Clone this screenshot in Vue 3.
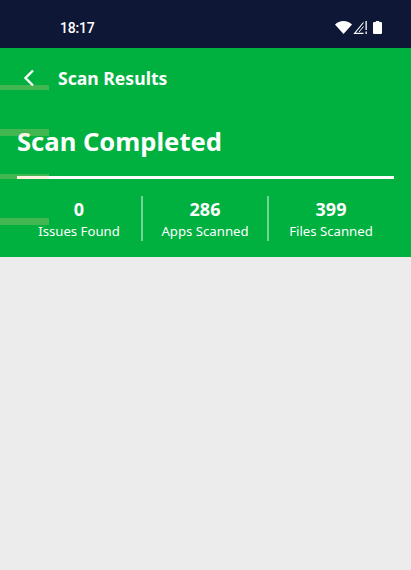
<script setup>
const stats = [
  { value: '0', label: 'Issues Found' },
  { value: '286', label: 'Apps Scanned' },
  { value: '399', label: 'Files Scanned' }
]
const streaks = [
  { top: 37, height: 5 },
  { top: 81, height: 7 },
  { top: 126, height: 5 },
  { top: 170, height: 7 }
]
</script>

<template>
  <div class="page">
    <div class="status">
      <span class="time">18:17</span>
      <div class="status-icons">
        <svg class="wifi" width="17" height="13" viewBox="0 0 17 13"><path d="M0 3.6C2.2 1.3 5.2 0 8.5 0s6.300 1.300 8.500 3.600L8.500 13z" fill="#fff"/></svg>
        <svg class="signal" width="14" height="13" viewBox="0 0 14 13"><path d="M10.500 1.500 1.500 12.400H10.500" fill="none" stroke="#fff" stroke-width="1.100"/><path d="M10.500 5.500 6 11" fill="none" stroke="#fff" stroke-width="1"/><path d="M12.500 0h1.300v9h-1.300zM12.500 10.500h1.300V13h-1.300z" fill="#fff"/></svg>
        <svg width="9" height="13" viewBox="0 0 9 13"><path d="M2.800 0h3.400v1H8a1 1 0 0 1 1 1v10a1 1 0 0 1-1 1H1a1 1 0 0 1-1-1V2a1 1 0 0 1 1-1h1.800z" fill="#fff"/></svg>
      </div>
    </div>
    <header class="hero">
      <i v-for="s in streaks" :key="s.top" class="streak" :style="{ top: s.top + 'px', height: s.height + 'px' }"></i>
      <div class="nav">
        <svg class="back" width="12" height="18" viewBox="0 0 12 18"><path d="M10 1.500 2.500 9l7.500 7.500" fill="none" stroke="#fff" stroke-width="2.400"/></svg>
        <span class="nav-title">Scan Results</span>
      </div>
      <h1 class="headline">Scan Completed</h1>
      <div class="progress"></div>
      <div class="stats">
        <div v-for="s in stats" :key="s.label" class="stat">
          <span class="value">{{ s.value }}</span>
          <span class="label">{{ s.label }}</span>
        </div>
      </div>
    </header>
  </div>
</template>

<style scoped>
.page {
  width: 411px;
  height: 570px;
  background: #ececec;
  font-family: "Noto Sans", "Open Sans", sans-serif;
  color: #fff;
  overflow: hidden;
}
.status {
  height: 48px;
  background: #0f1736;
  display: flex;
  align-items: center;
  justify-content: space-between;
  padding: 7px 29px 0 60px;
  box-sizing: border-box;
}
.time {
  font-family: Roboto, sans-serif;
  font-size: 14px;
  font-weight: 500;
  letter-spacing: -0.2px;
}
.status-icons {
  display: flex;
  align-items: center;
}
.wifi {
  margin-right: 1px;
}
.signal {
  margin-right: 6px;
}
.hero {
  position: relative;
  height: 209px;
  background: #00b140;
  box-sizing: border-box;
  padding: 0 17px;
}
.streak {
  position: absolute;
  left: 0;
  width: 49px;
  background: rgba(255, 200, 130, 0.26);
}
.nav {
  height: 60px;
  display: flex;
  align-items: center;
  padding-left: 6px;
}
.back {
  margin-right: 23px;
}
.nav-title {
  font-size: 17.600px;
  font-weight: 700;
}
.headline {
  margin: 0;
  padding-top: 15px;
  font-size: 25.600px;
  line-height: 38px;
  font-weight: 700;
}
.progress {
  height: 3px;
  margin-top: 15px;
  background: #fff;
}
.stats {
  display: grid;
  grid-template-columns: repeat(3, 126px);
  margin: 17px 0 0 -2px;
}
.stat {
  height: 45px;
  display: flex;
  flex-direction: column;
  align-items: center;
  border-left: 2px solid rgba(255, 255, 255, 0.45);
}
.stat:first-child {
  border-left: 0;
  padding-left: 2px;
}
.value {
  font-size: 18px;
  line-height: 27px;
  font-weight: 700;
}
.label {
  font-size: 13.200px;
  line-height: 16px;
}
</style>
